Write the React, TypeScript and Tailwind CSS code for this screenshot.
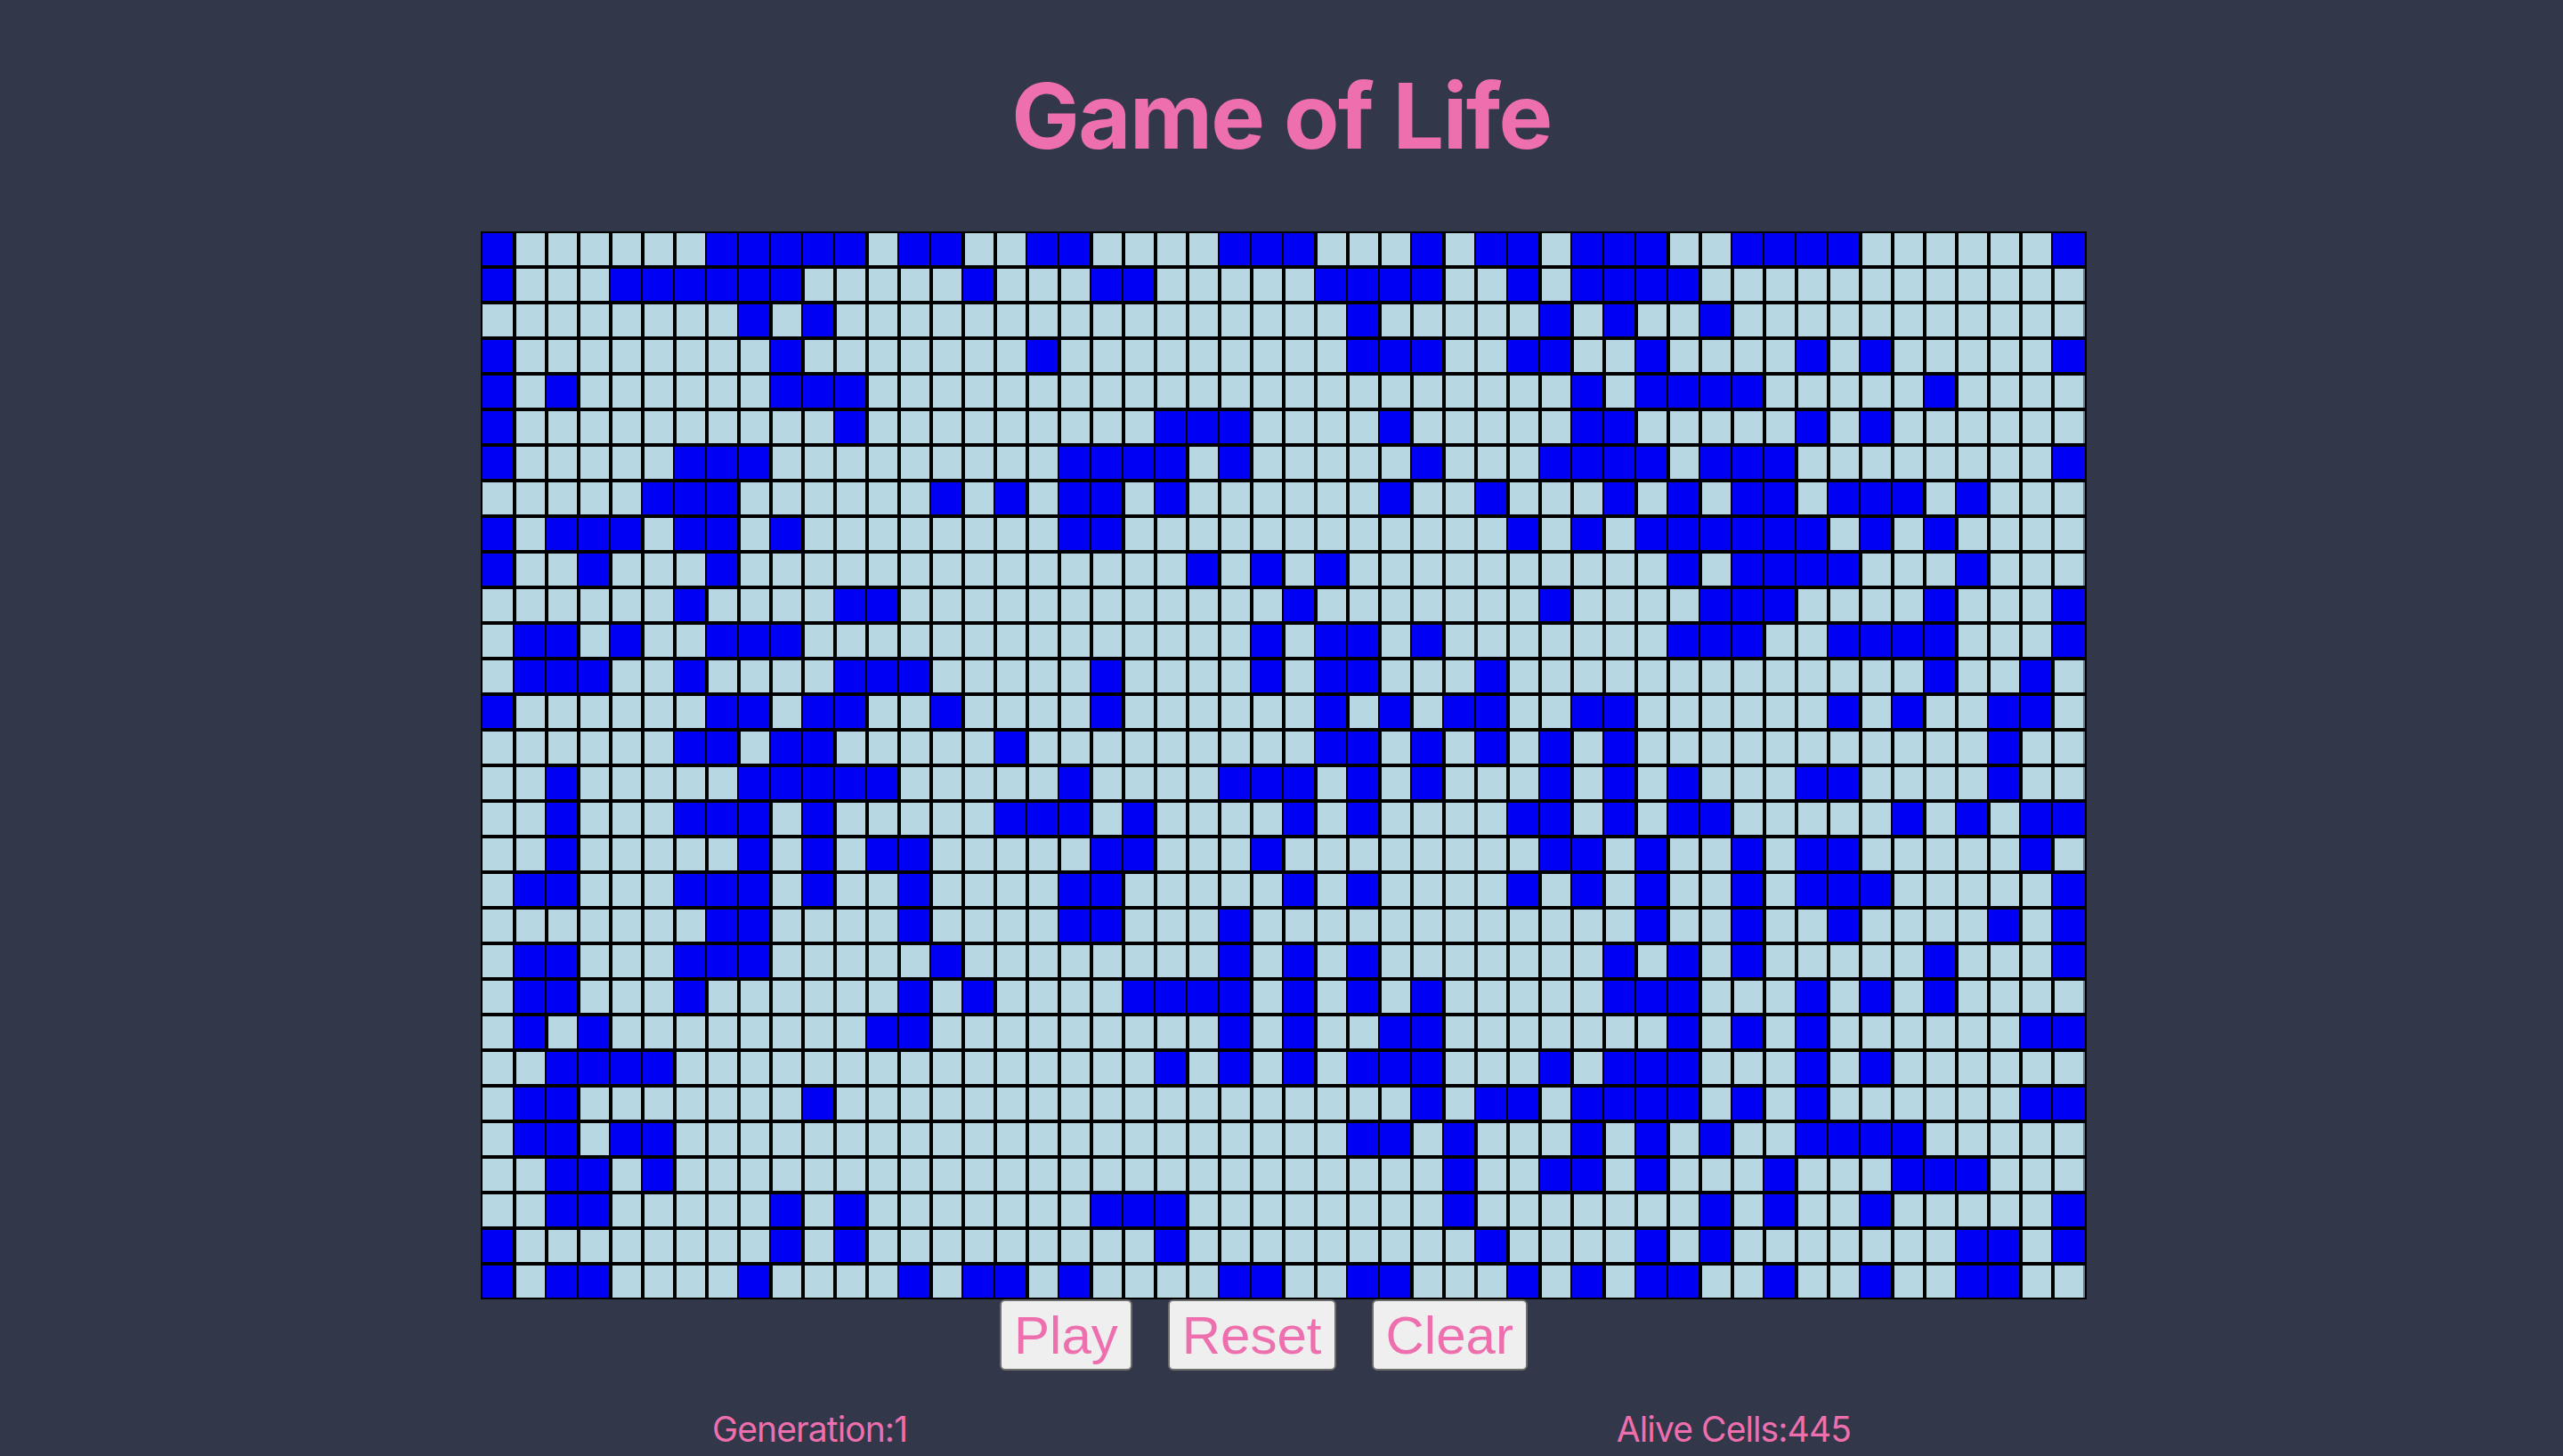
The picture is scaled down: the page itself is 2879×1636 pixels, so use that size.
import clsx from "clsx";

const ROWS = 30;
const COLS = 50;

// indexes of the alive cells, row by row
const aliveRows: number[][] = [
  [0, 7, 8, 9, 10, 11, 13, 14, 17, 18, 23, 24, 25, 29, 31, 32, 34, 35, 36, 39, 40, 41, 42, 49],
  [0, 4, 5, 6, 7, 8, 9, 15, 19, 20, 26, 27, 28, 29, 32, 34, 35, 36, 37],
  [8, 10, 27, 33, 35, 38],
  [0, 9, 17, 27, 28, 29, 32, 33, 36, 41, 43, 49],
  [0, 2, 9, 10, 11, 34, 36, 37, 38, 39, 45],
  [0, 11, 21, 22, 23, 28, 34, 35, 41, 43],
  [0, 6, 7, 8, 18, 19, 20, 21, 23, 29, 33, 34, 35, 36, 38, 39, 40, 49],
  [5, 6, 7, 14, 16, 18, 19, 21, 28, 31, 35, 37, 39, 40, 42, 43, 44, 46],
  [0, 2, 3, 4, 6, 7, 9, 18, 19, 32, 34, 36, 37, 38, 39, 40, 41, 43, 45],
  [0, 3, 7, 22, 24, 26, 37, 39, 40, 41, 42, 46],
  [6, 11, 12, 25, 33, 38, 39, 40, 45, 49],
  [1, 2, 4, 7, 8, 9, 24, 26, 27, 29, 37, 38, 39, 42, 43, 44, 45, 49],
  [1, 2, 3, 6, 11, 12, 13, 19, 24, 26, 27, 31, 45, 48],
  [0, 7, 8, 10, 11, 14, 19, 26, 28, 30, 31, 34, 35, 42, 44, 47, 48],
  [6, 7, 9, 10, 16, 26, 27, 29, 31, 33, 35, 47],
  [2, 8, 9, 10, 11, 12, 18, 23, 24, 25, 27, 29, 33, 35, 37, 41, 42, 47],
  [2, 6, 7, 8, 10, 16, 17, 18, 20, 25, 27, 32, 33, 35, 37, 38, 44, 46, 48, 49],
  [2, 8, 10, 12, 13, 19, 20, 24, 33, 34, 36, 39, 41, 42, 48],
  [1, 2, 6, 7, 8, 10, 13, 18, 19, 25, 27, 32, 34, 36, 39, 41, 42, 43, 49],
  [7, 8, 13, 18, 19, 23, 36, 39, 42, 47, 49],
  [1, 2, 6, 7, 8, 14, 23, 25, 27, 35, 37, 39, 45, 49],
  [1, 2, 6, 13, 15, 20, 21, 22, 23, 25, 27, 29, 35, 36, 37, 41, 43, 45],
  [1, 3, 12, 13, 23, 25, 28, 29, 37, 39, 41, 48, 49],
  [2, 3, 4, 5, 21, 23, 25, 27, 28, 29, 33, 35, 36, 37, 41, 43],
  [1, 2, 10, 29, 31, 32, 34, 35, 36, 37, 39, 41, 48, 49],
  [1, 2, 4, 5, 27, 28, 30, 34, 36, 38, 41, 42, 43, 44],
  [2, 3, 5, 30, 33, 34, 36, 40, 44, 45, 46],
  [2, 3, 9, 11, 19, 20, 21, 30, 38, 40, 43, 49],
  [0, 9, 11, 21, 31, 36, 38, 46, 47, 49],
  [0, 2, 3, 8, 13, 15, 16, 18, 23, 24, 27, 28, 32, 34, 36, 37, 40, 43, 46, 47],
];

const Cell = ({ alive, col }: { alive: boolean; col: number }) => (
  <div className="w-[36px] h-[40px] py-[2px]">
    <div
      className={clsx(
        "h-full",
        alive ? "bg-[#0000f5]" : "bg-[#b7d7e3]",
        !alive && col > 0 && "ml-[2px]",
        col < COLS - 1 && "mr-[2px]",
        !alive && col === COLS - 1 && "border-r-2 border-[#5d7d93]"
      )}
    />
  </div>
);

const Board = () => (
  <div className="ml-[540px] w-[1804px] h-[1200px] px-[2px] bg-black grid grid-cols-[repeat(50,36px)] grid-rows-[repeat(30,40px)]">
    {Array.from({ length: ROWS }, (_, row) =>
      Array.from({ length: COLS }, (_, col) => (
        <Cell key={`${row}-${col}`} alive={aliveRows[row].includes(col)} col={col} />
      ))
    )}
  </div>
);

const buttons = ["Play", "Reset", "Clear"];

export default function App() {
  return (
    <div className="min-h-screen bg-[#323749] text-[#ee6fae] font-['Inter',sans-serif]">
      <div className="h-[260px] flex items-center justify-center">
        <h1 className="text-[102px] font-bold tracking-[-1.6px]">Game of Life</h1>
      </div>

      <Board />

      <div className="flex justify-center gap-[40px] pr-[40px]">
        {buttons.map((label) => (
          <button
            key={label}
            className="h-[80px] px-[14px] border-2 border-[#6e6e6e] rounded-[6px] bg-[#efefef] text-[60px] leading-[69px] font-['Liberation_Sans',Arial,sans-serif]"
          >
            {label}
          </button>
        ))}
      </div>

      <div className="mx-auto mt-[46px] w-[1279px] flex justify-between text-[39px] leading-[40px] tracking-[-0.9px]">
        <span>Generation:1</span>
        <span>Alive Cells:445</span>
      </div>
    </div>
  );
}
